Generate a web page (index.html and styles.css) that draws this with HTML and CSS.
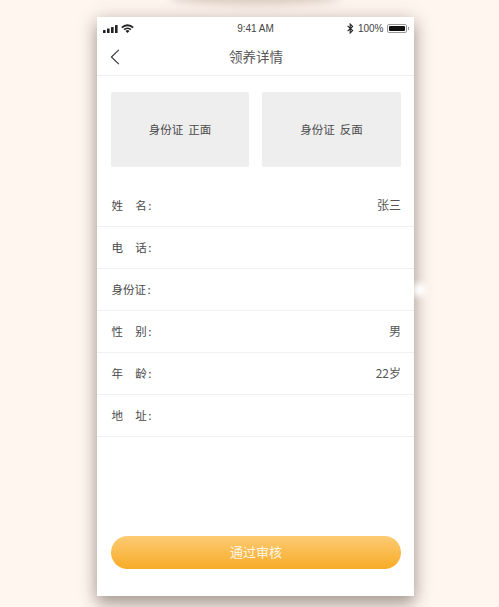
FILE: index.html
```
<!DOCTYPE html>
<html lang="zh-CN">
<head>
<meta charset="utf-8">
<title>领养详情</title>
<link rel="stylesheet" href="styles.css">
</head>
<body>
<div class="top-smudge"></div>
<main class="phone">
  <div class="status">
    <div class="status-left">
      <svg class="signal" width="15" height="8" viewBox="0 0 15 8"><rect x="0" y="5" width="2.6" height="3" rx=".5"/><rect x="4" y="3.6" width="2.6" height="4.4" rx=".5"/><rect x="8" y="2" width="2.6" height="6" rx=".5"/><rect x="12" y="0" width="2.6" height="8" rx=".5"/></svg>
      <svg class="wifi" width="13" height="9" viewBox="0 0 13 9"><path d="M6.5 9 4.5 6.9a2.9 2.9 0 0 1 4 0z"/><path d="M.2 2.9a9 9 0 0 1 12.6 0l-1.3 1.3a7.2 7.2 0 0 0-10 0z"/><path d="M2.5 5.1a5.7 5.7 0 0 1 8 0L9.3 6.3a4 4 0 0 0-5.6 0z"/></svg>
    </div>
    <span class="time">9:41 AM</span>
    <div class="status-right">
      <svg class="bt" width="7" height="11" viewBox="0 0 7 11"><path d="M.6 2.9 5.6 7.6 3.2 10V1L5.6 3.4.6 8.1" fill="none" stroke="#222" stroke-width="1.1"/></svg>
      <span class="pct">100%</span>
      <span class="battery"><span class="battery-fill"></span></span>
    </div>
  </div>
  <header class="nav">
    <svg class="back" width="10" height="16" viewBox="0 0 10 16"><path d="M8.8 .8 1.4 8l7.4 7.2" fill="none" stroke="#333" stroke-width="1.1"/></svg>
    <h1 class="title">领养详情</h1>
  </header>
  <section class="ids">
    <div class="id-card">身份证&nbsp;&nbsp;正面</div>
    <div class="id-card">身份证&nbsp;&nbsp;反面</div>
  </section>
  <section class="rows">
    <div class="row"><span class="label"><span>姓</span><span>名<span class="colon">:</span></span></span><span class="value">张三</span></div>
    <div class="row"><span class="label"><span>电</span><span>话<span class="colon">:</span></span></span><span class="value"></span></div>
    <div class="row"><span class="label"><span>身份证<span class="colon">:</span></span></span><span class="value"></span></div>
    <div class="row"><span class="label"><span>性</span><span>别<span class="colon">:</span></span></span><span class="value">男</span></div>
    <div class="row"><span class="label"><span>年</span><span>龄<span class="colon">:</span></span></span><span class="value">22岁</span></div>
    <div class="row"><span class="label"><span>地</span><span>址<span class="colon">:</span></span></span><span class="value"></span></div>
  </section>
  <div class="footer"><button class="approve">通过审核</button></div>
  <div class="blot"></div>
</main>
</body>
</html>
```
FILE: styles.css
```
* { box-sizing: border-box; }
html, body { height: 100%; }
body {
  margin: 0;
  height: 607px;
  overflow: hidden;
  position: relative;
  background: #fff6f0;
  font-family: "Noto Sans CJK SC", "Liberation Sans", sans-serif;
  color: #444;
  padding: 17px 0 0 97px;
}
.top-smudge {
  position: absolute;
  left: 170px;
  top: -14px;
  width: 170px;
  height: 14px;
  border-radius: 50%;
  box-shadow: 0 4px 10px rgba(120, 95, 70, .3);
}
.phone {
  position: relative;
  width: 317px;
  height: 579px;
  background: #fff;
  display: flex;
  flex-direction: column;
  box-shadow: 0 9px 14px rgba(70, 60, 50, .34), 0 2px 18px rgba(90, 70, 50, .28);
}
.status {
  height: 23px;
  padding: 0 6px;
  display: grid;
  grid-template-columns: 1fr auto 1fr;
  align-items: center;
  font-family: "Liberation Sans", sans-serif;
  font-size: 10px;
  color: #444;
}
.status-left { display: flex; align-items: center; gap: 3px; }
.signal, .wifi { fill: #222; display: block; }
.status-right { display: flex; justify-content: flex-end; align-items: center; gap: 3.5px; padding-right: 1px; }
.battery {
  position: relative;
  width: 20px;
  height: 9px;
  border: 1px solid #999;
  border-radius: 2px;
  padding: 1px;
  display: block;
}
.battery::after {
  content: "";
  position: absolute;
  right: -3px;
  top: 2px;
  width: 1.5px;
  height: 3px;
  background: #999;
}
.battery-fill { display: block; height: 100%; background: #111; border-radius: 1px; }
.nav {
  height: 36px;
  position: relative;
  display: flex;
  align-items: center;
  justify-content: center;
  border-bottom: 1px solid #eeeeee;
  padding: 0 0 3px 1px;
}
.back { position: absolute; left: 13px; top: 9px; }
.title { margin: 0; font-size: 13.5px; font-weight: 400; color: #555; }
.ids {
  display: grid;
  grid-template-columns: 138px 139px;
  gap: 13px;
  padding: 16px 16px 0 14px;
}
.id-card {
  height: 75px;
  background: #eeeeee;
  border-radius: 2px;
  display: flex;
  align-items: center;
  justify-content: center;
  font-size: 11.5px;
  color: #4a4a4a;
  padding-bottom: 2px;
}
.rows { margin-top: 18px; }
.row {
  height: 42px;
  display: flex;
  align-items: center;
  justify-content: space-between;
  padding: 0 13px 2px 14.5px;
  border-bottom: 1px solid #f1f1f1;
  font-size: 11.5px;
  color: #4a4a4a;
}
.label { display: flex; width: 40px; justify-content: space-between; }
.colon { margin-left: 1.5px; }
.value { color: #555; font-size: 12px; }
.footer { margin-top: auto; padding: 0 13px 27px 14px; }
.approve {
  display: block;
  width: 100%;
  height: 33px;
  border: 0;
  border-radius: 17px;
  background: linear-gradient(#fccb75, #f8ab26);
  color: #fff6e6;
  font-family: inherit;
  font-size: 13px;
  padding: 0 0 2px;
}
.blot {
  position: absolute;
  left: 316px;
  top: 266px;
  width: 14px;
  height: 14px;
  border-radius: 50%;
  background: #fff;
  filter: blur(3px);
}
```
